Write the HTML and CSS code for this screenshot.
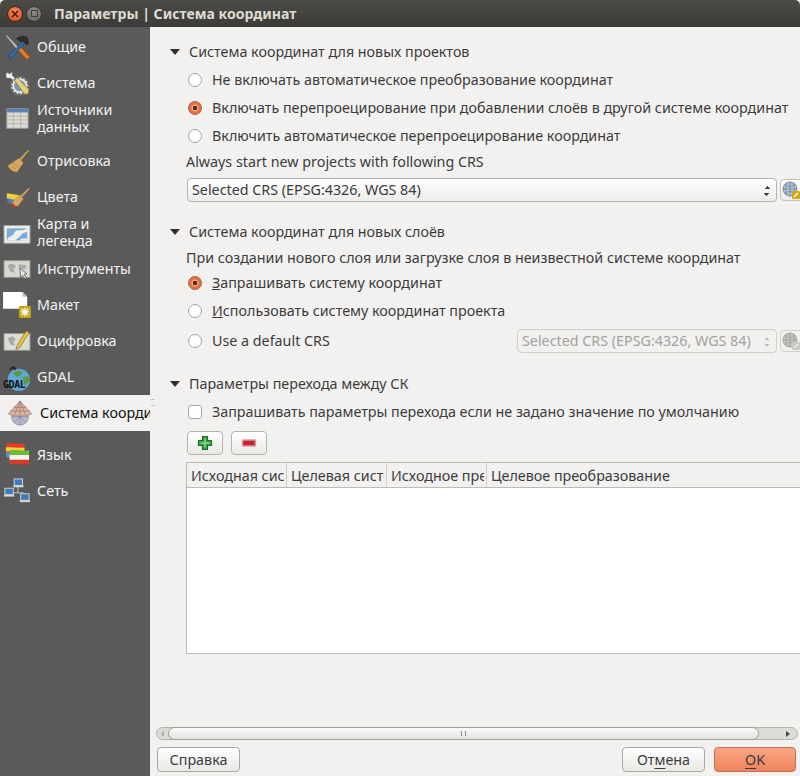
FILE: index.html
```html
<!DOCTYPE html>
<html>

<head>
    <title>Параметры | Система координат</title>
    <link rel="stylesheet" href="styles.css">
</head>

<body>
    <div class="window">
        <div class="titlebar">
            <span class="wm-btn wm-close"><svg width="8" height="8" viewBox="0 0 8 8"><path d="M1 1l6 6M7 1l-6 6" stroke="#4a1a0c" stroke-width="1.6"/></svg></span>
            <span class="wm-btn wm-max"><span class="wm-square"></span></span>
            <span class="wm-title">Параметры | Система координат</span>
        </div>
        <div class="content">
            <nav class="sidebar">
                <div class="nav-item">
                    <svg class="nav-icon" viewBox="0 0 28 28"><path d="M2 2l1-1 15 16-2 2z" fill="#c9ced6" stroke="#555" stroke-width=".5"/><path d="M15 17l3-3 9 10c1 2-1 4-3 3z" fill="#ef7a1a" stroke="#8a3d08" stroke-width=".6"/><path d="M6 23L20 8l2 2L8 26c-2 1-4-1-2-3z" fill="#2f6fb5" stroke="#12335c" stroke-width=".6"/><path d="M13 5c4-4 9-4 13-1l1 6-3 2-3-4-3 1z" fill="#2c2c2c"/></svg>
                    <span>Общие</span>
                </div>
                <div class="nav-item">
                    <svg class="nav-icon" viewBox="0 0 28 28"><circle cx="17" cy="17" r="9.500" fill="#e8e8e4" stroke="#6d6d6d" stroke-dasharray="3 1.600" stroke-width="3"/><circle cx="17" cy="17" r="6" fill="#6f95c4"/><path d="M11 11l3-3 13 13-1 5-4 0z" fill="#e4cf72" stroke="#5b5530" stroke-width=".6"/><path d="M5 2c-3 1-4 4-2 7l4 0 3 2 2-2-3-3 0-4-3 2-2-1z" fill="#f0f0f0" stroke="#444" stroke-width=".5"/></svg>
                    <span>Система</span>
                </div>
                <div class="nav-item">
                    <svg class="nav-icon" viewBox="0 0 28 28"><rect x="3" y="3" width="23" height="21" fill="#dcdcd4" stroke="#9a9a94"/><rect x="3" y="3" width="23" height="4" fill="#5b82b5"/><path d="M3 11h23M3 15h23M3 19h23M10 7v17M18 7v17" stroke="#b4b4ac"/></svg>
                    <span class="nav-label">Источники<br>данных</span>
                </div>
                <div class="nav-item nav-gap">
                    <svg class="nav-icon" viewBox="0 0 28 28"><path d="M16 12L26 2l1 1-9 11z" fill="#c99a4c"/><path d="M16 11l5 5-7 10c-4 0-8-3-10-7z" fill="#d7a862" stroke="#9a7434" stroke-width=".5"/><path d="M10 16l5 5M8 19l4 4" stroke="#a77f3d"/></svg>
                    <span>Отрисовка</span>
                </div>
                <div class="nav-item">
                    <svg class="nav-icon" viewBox="0 0 28 28"><path d="M17 13L27 4l1 1-9 10z" fill="#c99a4c"/><path d="M3 10l14 2-3 6-11-2z" fill="#f1d23c"/><path d="M3 15l12 3-3 5-8-3z" fill="#4d7fc0"/><path d="M4 20l9 2-1 4z" fill="#d5392e"/><path d="M17 12l4 4-6 8c-3 0-5-2-6-5z" fill="#d7a862" stroke="#9a7434" stroke-width=".5"/></svg>
                    <span>Цвета</span>
                </div>
                <div class="nav-item">
                    <svg class="nav-icon" viewBox="0 0 28 28"><rect x="0" y="6" width="28" height="19" fill="#eeeeea" stroke="#a5a5a0"/><rect x="3" y="9" width="22" height="13" fill="#7ca9dc"/><path d="M3 22c3-7 6-3 8-8s9-1 14-5v4c-4 1-5 1-7 4l-6 5z" fill="#f0f0ea"/><path d="M18 20h7v2h-7z" fill="#f0f0ea"/></svg>
                    <span class="nav-label">Карта и<br>легенда</span>
                </div>
                <div class="nav-item">
                    <svg class="nav-icon" viewBox="0 0 28 28"><rect x="0" y="5" width="28" height="18" fill="#d8d8d2" stroke="#98988f"/><path d="M4 10l5-2 4 3-3 3 2 4-5-1zM15 9l9 1-1 4-6-1z" fill="#aaaaa4"/><path d="M17 13l1 10 2-2 3 4 1.500-1-3-4 3-1z" fill="#e8e8e8" stroke="#333" stroke-width=".7"/></svg>
                    <span>Инструменты</span>
                </div>
                <div class="nav-item">
                    <svg class="nav-icon" viewBox="0 0 28 28"><path d="M-1 0h21l5 5v13H-1z" fill="#fff"/><path d="M20 0v5h5z" fill="#bdbdbd"/><rect x="16" y="15" width="13" height="13" rx="1.500" fill="#c9a316"/><path d="M22.500 17v9M18 21.500h9M19 18l7 7M26 18l-7 7" stroke="#fff" stroke-width="1.300"/></svg>
                    <span>Макет</span>
                </div>
                <div class="nav-item">
                    <svg class="nav-icon" viewBox="0 0 28 28"><rect x="0" y="6" width="28" height="18" fill="#dcdcd6" stroke="#9a9a94"/><path d="M4 11l5-2 4 3-3 3 2 4-5-1z" fill="#a9a9a3"/><path d="M14 19l10-16 3 2-10 16-4 2z" fill="#e6c836" stroke="#5f5220" stroke-width=".6"/></svg>
                    <span>Оцифровка</span>
                </div>
                <div class="nav-item">
                    <svg class="nav-icon" viewBox="0 0 28 28"><circle cx="16" cy="17" r="12" fill="#5fa7d8"/><path d="M10 10c4-4 8-3 10-1l-3 4-4 1zM20 14l7-1 1 5-6 5z" fill="#5a9a3c"/><path d="M8 3l5 3M6 6l6-3" stroke="#222" stroke-width="1.500"/></svg>
                    <span class="nav-gdal-mark">GDAL</span>
                    <span>GDAL</span>
                </div>
                <div class="nav-item nav-active">
                    <svg class="nav-icon" viewBox="0 0 28 28"><circle cx="14" cy="18" r="9" fill="#b9b7cf" stroke="#8d8ba6"/><path d="M5 18h18M14 9v18M8 12q6 12 12 0M8 24q6-9 12 0" fill="none" stroke="#85839e" stroke-width=".7"/><path d="M14 1L27 15c-8 3-18 3-26 0z" fill="#d8b3a4" stroke="#9a7466" stroke-width=".6"/><path d="M14 1v16M14 1L8 16M14 1l6 15M7 8h14M4 12h20" stroke="#8f6b5d" stroke-width=".6" fill="none"/></svg>
                    <span>Система координат</span>
                </div>
                <div class="nav-item nav-gap">
                    <svg class="nav-icon" viewBox="0 0 28 28"><path d="M2 2c7-2 13 1 20 0v10H2z" fill="#e8392b"/><path d="M2 6c7-1 13 1 20 0v4H2z" fill="#f2d23a"/><path d="M2 11h6v6H3z" fill="#5f8fd0"/><path d="M6 9c7-1 14 1 21 0v5H6z" fill="#6dbb3a"/><path d="M6 14h21v6H6z" fill="#f3f3ef"/><path d="M6 19h21v5c-7 1-14-1-21 0z" fill="#d8392b"/></svg>
                    <span>Язык</span>
                </div>
                <div class="nav-item">
                    <svg class="nav-icon" viewBox="0 0 28 28"><path d="M15 10v6H8M15 16h6" stroke="#ccc" fill="none"/><rect x="11" y="1" width="9" height="7" fill="#3f78bb" stroke="#d8d8d8"/><rect x="10" y="8" width="11" height="2" fill="#d8d8d8"/><rect x="1" y="11" width="9" height="7" fill="#3f78bb" stroke="#d8d8d8"/><rect x="0" y="18" width="11" height="2" fill="#d8d8d8"/><rect x="18" y="17" width="9" height="7" fill="#3f78bb" stroke="#d8d8d8"/><rect x="17" y="24" width="11" height="2" fill="#d8d8d8"/></svg>
                    <span>Сеть</span>
                </div>
            </nav>
            <main class="main">
                <span class="grip"></span>
                <div class="scroll">
                    <div class="group-title group-first"><span class="arrow"></span>Система координат для новых проектов</div>
                    <div class="radios">
                        <label class="opt"><span class="radio"></span>Не включать автоматическое преобразование координат</label>
                        <label class="opt"><span class="radio checked"></span>Включать перепроецирование при добавлении слоёв в другой системе координат</label>
                        <label class="opt"><span class="radio"></span>Включить автоматическое перепроецирование координат</label>
                    </div>
                    <div class="hint hint-crs">Always start new projects with following CRS</div>
                    <div class="crs-row">
                        <div class="combo combo-wide">Selected CRS (EPSG:4326, WGS 84)<span class="spin"></span></div>
                        <span class="globe-btn">
                            <svg width="18" height="18" viewBox="0 0 18 18"><circle cx="8" cy="8" r="7" fill="#a9c4e2" stroke="#7d8a99"/><path d="M1 8h14M8 1v14M3 3.500q5 4 10 0M3 12.500q5-4 10 0M4.500 2q-2 6 0 12M11.500 2q2 6 0 12" fill="none" stroke="#77808a" stroke-width=".7"/><rect x="10" y="10" width="8" height="8" rx="1" fill="#d1a915"/><path d="M12 16l4-4" stroke="#fff" stroke-width="1.500"/></svg>
                        </span>
                    </div>

                    <div class="group-title group-second"><span class="arrow"></span>Система координат для новых слоёв</div>
                    <div class="hint hint-layer">При создании нового слоя или загрузке слоя в неизвестной системе координат</div>
                    <label class="opt"><span class="radio checked"></span><span><u>З</u>апрашивать систему координат</span></label>
                    <label class="opt"><span class="radio"></span><span><u>И</u>спользовать систему координат проекта</span></label>
                    <div class="opt opt-combo">
                        <span class="radio"></span>Use a default CRS
                        <div class="crs-row crs-off">
                            <div class="combo combo-off">Selected CRS (EPSG:4326, WGS 84)<span class="spin"></span></div>
                            <span class="globe-btn">
                                <svg width="18" height="18" viewBox="0 0 18 18"><circle cx="8" cy="8" r="7" fill="#c4c4c2" stroke="#a5a5a3"/><path d="M1 8h14M8 1v14M3 3.500q5 4 10 0M3 12.500q5-4 10 0M4.500 2q-2 6 0 12M11.500 2q2 6 0 12" fill="none" stroke="#9c9c9a" stroke-width=".7"/><rect x="10" y="10" width="8" height="8" rx="1" fill="#c9c9c7"/><path d="M12 16l4-4" stroke="#eee" stroke-width="1.500"/></svg>
                            </span>
                        </div>
                    </div>

                    <div class="group-title group-third"><span class="arrow"></span>Параметры перехода между СК</div>
                    <label class="opt opt-check"><span class="check"></span>Запрашивать параметры перехода если не задано значение по умолчанию</label>
                    <div class="tool-row">
                        <span class="tool-btn">
                            <svg width="16" height="16" viewBox="0 0 16 16"><path d="M5.500 1.500h5v4h4v5h-4v4h-5v-4h-4v-5h4z" fill="#3fa34a" stroke="#1d6b2a" stroke-width="1.200" stroke-linejoin="round"/><path d="M8 3.500v9M3.500 8h9" stroke="#c8efc8" stroke-width=".8"/></svg>
                        </span>
                        <span class="tool-btn">
                            <svg width="16" height="16" viewBox="0 0 16 16"><rect x="1.500" y="5" width="13" height="6" rx="1" fill="#c9222e" stroke="#d99a9e" stroke-width="1.500"/></svg>
                        </span>
                    </div>
                    <div class="table">
                        <div class="table-head">
                            <span class="cell">Исходная система координат</span>
                            <span class="cell">Целевая система координат</span>
                            <span class="cell">Исходное преобразование</span>
                            <span class="cell cell-last">Целевое преобразование</span>
                        </div>
                    </div>
                </div>
                <div class="hscroll">
                    <span class="hs-arrow hs-left"></span>
                    <div class="hs-thumb"><span class="hs-grip"></span></div>
                    <span class="hs-arrow hs-right"></span>
                </div>
                <div class="footer">
                    <span class="btn">Справка</span>
                    <span class="footer-right">
                        <span class="btn">От<u>м</u>ена</span>
                        <span class="btn btn-ok"><u>O</u>K</span>
                    </span>
                </div>
            </main>
        </div>
    </div>
</body>

</html>
```

FILE: styles.css
```css
* {
    box-sizing: border-box;
}

body {
    margin: 0;
    background: #f2f1ef;
    color: #3c3c3c;
    font-family: "Noto Sans", sans-serif;
    font-size: 14.3px;
}

.window {
    width: 800px;
    height: 776px;
    display: flex;
    flex-direction: column;
    overflow: hidden;
}

/* title bar */
.titlebar {
    height: 27px;
    flex: none;
    display: flex;
    align-items: center;
    padding-left: 7px;
    background: linear-gradient(#4c4b46, #3c3b37);
    border-radius: 5px 5px 0 0;
}

.wm-btn {
    width: 16px;
    height: 16px;
    border-radius: 50%;
    display: flex;
    align-items: center;
    justify-content: center;
    margin-right: 3px;
}

.wm-close {
    background: radial-gradient(circle at 50% 30%, #f4865a, #de4a20);
    border: 1px solid #3a2a22;
}

.wm-max {
    background: radial-gradient(circle at 50% 30%, #8e8c85, #66645e);
    border: 1px solid #38372f;
}

.wm-square {
    width: 7px;
    height: 7px;
    border: 1px solid #3c3b37;
}

.wm-title {
    margin-left: 9px;
    color: #dfdbd2;
    font-weight: 700;
    font-size: 14.1px;
}

.content {
    flex: 1;
    display: flex;
    min-height: 0;
}

/* left list */
.sidebar {
    width: 150px;
    flex: none;
    padding-top: 2px;
    background: #5a5a5a;
    color: #f2f2f2;
    overflow: hidden;
}

.nav-item {
    height: 36px;
    display: flex;
    align-items: center;
    gap: 7px;
    padding-left: 4px;
    padding-bottom: 1px;
    white-space: nowrap;
    position: relative;
}

.nav-gap {
    margin-top: 6px;
}

.nav-icon {
    width: 26px;
    height: 26px;
    flex: none;
    overflow: visible;
}

.nav-label {
    line-height: 17px;
    margin-bottom: 2px;
}

.nav-gdal-mark {
    position: absolute;
    left: 3px;
    top: 21px;
    font-size: 10px;
    font-weight: 700;
    line-height: 10px;
    color: #111;
    font-family: "DejaVu Sans Mono", monospace;
    letter-spacing: -.4px;
}

.nav-active {
    background: #f2f1ef;
    color: #111;
    padding-left: 7px;
}

/* main pane */
.main {
    flex: 1;
    min-width: 0;
    display: flex;
    flex-direction: column;
    position: relative;
}

.grip {
    position: absolute;
    left: 1px;
    top: 372px;
    width: 4px;
    height: 7px;
    border-top: 1px solid #c8c7c3;
    border-bottom: 1px solid #c8c7c3;
}

.scroll {
    flex: 1;
    min-height: 0;
    padding-top: 15px;
    overflow: hidden;
}

.group-title {
    height: 20px;
    display: flex;
    align-items: center;
    padding-left: 20px;
    padding-bottom: 1px;
    white-space: nowrap;
}

.group-second {
    margin-top: 20px;
}

.group-third {
    margin-top: 17px;
}

.arrow {
    width: 0;
    height: 0;
    margin-right: 9px;
    border-left: 5px solid transparent;
    border-right: 5px solid transparent;
    border-top: 6px solid #2e2e2e;
}

.radios {
    margin-top: 4px;
}

.opt {
    height: 28px;
    display: flex;
    align-items: center;
    padding-left: 38px;
    padding-bottom: 1px;
    white-space: nowrap;
}

.opt-combo {
    height: 32px;
}

.opt-check {
    margin-top: 4px;
}

.radio {
    width: 14px;
    height: 14px;
    margin-right: 10px;
    flex: none;
    border-radius: 50%;
    border: 1px solid #a9a7a0;
    background: #fff;
}

.radio.checked {
    border-color: #a9603f;
    background: radial-gradient(circle, #5a2a18 0 2px, #f0a88c 2.5px 3px, #e56f43 4px);
}

.check {
    width: 14px;
    height: 14px;
    margin-right: 10px;
    flex: none;
    border-radius: 3px;
    border: 1px solid #a9a7a0;
    background: #fff;
}

.hint {
    height: 20px;
    display: flex;
    align-items: center;
    padding-left: 36px;
    padding-bottom: 1px;
    white-space: nowrap;
}

.hint-crs {
    margin-top: 2px;
}

.hint-layer {
    margin-top: 6px;
    margin-bottom: 1px;
}

.crs-row {
    display: flex;
    align-items: center;
    gap: 3px;
    margin: 6px 0 0 37px;
}

.crs-off {
    margin: 0 0 0 auto;
}

.combo {
    height: 24px;
    flex: none;
    display: flex;
    align-items: center;
    padding-left: 4px;
    padding-bottom: 1px;
    position: relative;
    border: 1px solid #b5b3ac;
    border-radius: 4px;
    background: linear-gradient(#fff, #ececea);
    white-space: nowrap;
}

.combo-wide {
    width: 590px;
}

.combo-off {
    width: 260px;
    color: #a3a29e;
    background: #f2f1ef;
    border-color: #d2d0cb;
}

.spin {
    position: absolute;
    right: 6px;
    top: 7px;
    width: 6px;
    height: 10px;
    background:
        linear-gradient(to top left, #444 50%, transparent 50%) 0 0 / 3px 3px no-repeat,
        linear-gradient(to top right, #444 50%, transparent 50%) 3px 0 / 3px 3px no-repeat,
        linear-gradient(to bottom left, #444 50%, transparent 50%) 0 7px / 3px 3px no-repeat,
        linear-gradient(to bottom right, #444 50%, transparent 50%) 3px 7px / 3px 3px no-repeat;
}

.combo-off .spin {
    opacity: .35;
}

.globe-btn {
    width: 28px;
    height: 22px;
    flex: none;
    display: flex;
    align-items: center;
    padding-left: 1px;
    border: 1px solid #c2c0ba;
    border-radius: 4px;
    background: linear-gradient(#fff, #ececea);
}

.crs-off .globe-btn {
    background: #f2f1ef;
    border-color: #d2d0cb;
    margin-right: -8px;
}

.tool-row {
    display: flex;
    gap: 8px;
    margin: 5px 0 0 37px;
}

.tool-btn {
    width: 36px;
    height: 24px;
    display: flex;
    align-items: center;
    justify-content: center;
    border: 1px solid #b5b3ac;
    border-radius: 4px;
    background: linear-gradient(#fff, #e9e8e5);
}

.table {
    height: 192px;
    margin: 7px 0 0 36px;
    background: #fff;
    border: 1px solid #bdbbb5;
    border-right: 0;
}

.table-head {
    height: 25px;
    display: flex;
    background: #f2f1ef;
    border-bottom: 1px solid #bdbbb5;
}

.cell {
    width: 100px;
    flex: none;
    padding: 1px 0 0 4px;
    line-height: 24px;
    overflow: hidden;
    white-space: nowrap;
    position: relative;
    border-right: 1px solid #d2d0cb;
}

.cell::after {
    content: "";
    position: absolute;
    top: 0;
    right: 0;
    bottom: 0;
    width: 2px;
    background: #f2f1ef;
}

.cell-last {
    flex: 1;
    border-right: 0;
}

/* horizontal scrollbar */
.hscroll {
    height: 13px;
    flex: none;
    margin: 0 2px 7px 6px;
    display: flex;
    align-items: center;
    border: 1px solid #b5b3ac;
    border-radius: 7px;
    background: #dcdbd8;
}

.hs-arrow {
    width: 0;
    height: 0;
    border-top: 3px solid transparent;
    border-bottom: 3px solid transparent;
}

.hs-left {
    margin: 0 4px;
    border-right: 3px solid #aaa;
}

.hs-right {
    margin-left: 27px;
    border-left: 4px solid #444;
}

.hs-thumb {
    width: 591px;
    height: 13px;
    display: flex;
    align-items: center;
    justify-content: center;
    border: 1px solid #a09e98;
    border-radius: 7px;
    background: linear-gradient(#fafaf9, #e4e3e0);
}

.hs-grip {
    width: 5px;
    height: 5px;
    border-left: 1px solid #888;
    border-right: 1px solid #888;
}

/* dialog buttons */
.footer {
    height: 29px;
    flex: none;
    padding: 0 4px 4px 7px;
    display: flex;
    justify-content: space-between;
}

.footer-right {
    display: flex;
    gap: 9px;
}

.btn {
    width: 83px;
    height: 25px;
    display: flex;
    align-items: center;
    justify-content: center;
    border: 1px solid #aaa8a2;
    border-radius: 4px;
    background: linear-gradient(#fff, #e9e8e5);
}

.btn-ok {
    width: 82px;
}

.btn u {
    text-underline-offset: 3px;
}

.btn-ok {
    border-color: #c0704f;
    background: linear-gradient(#f9a585, #ef845c);
}
```
